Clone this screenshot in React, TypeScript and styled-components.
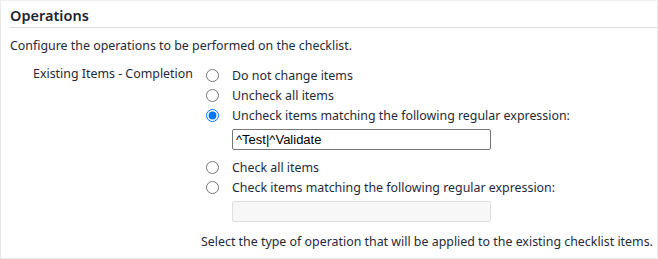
import React from "react";
import styled, { createGlobalStyle } from "styled-components";

const Global = createGlobalStyle`
  html, body { margin: 0; padding: 0; background: #fff; }
  body { font-family: "Noto Sans", "Open Sans", sans-serif; }
`;

const Panel = styled.div`
  box-sizing: border-box;
  width: 658px;
  height: 259px;
  border: 1px solid #e8e8e8;
  border-top-color: #efefef;
  padding-left: 9px;
  color: #1f2a3a;
  font-size: 12.4px;
`;

const Title = styled.h2`
  margin: 0;
  padding: 6px 0 3px 0;
  font-size: 14.5px;
  font-weight: 600;
  line-height: 17px;
  color: #1c2433;
  border-bottom: 1px solid #dcdcdc;
`;

const Description = styled.p`
  margin: 9px 0 0 0;
  line-height: 17px;
`;

const FormRow = styled.div`
  display: grid;
  grid-template-columns: 191px 1fr;
  margin-top: 11px;
`;

const Label = styled.div`
  padding-left: 23px;
  line-height: 17px;
  padding-top: 0px;
`;

const Options = styled.div`
  display: flex;
  flex-direction: column;
`;

const Option = styled.label`
  display: flex;
  align-items: center;
  height: 20px;
  line-height: 17px;
  input {
    margin: 0 13px 0 5px;
    width: 13px;
    height: 13px;
  }
`;

const TextInput = styled.input<{ $disabled?: boolean }>`
  box-sizing: border-box;
  width: 259px;
  height: 21px;
  margin: 4px 0 7px 31px;
  padding: 0 3px;
  font-family: "Liberation Sans", Arial, sans-serif;
  font-size: 13px;
  color: #000;
  border-radius: 2px;
  border: 1px solid ${(p) => (p.$disabled ? "#dedede" : "#767676")};
  background: ${(p) => (p.$disabled ? "#f7f7f7" : "#fff")};
  outline: none;
`;

const Help = styled.div`
  margin-top: 4px;
  line-height: 17px;
`;

export default function App() {
  return (
    <>
      <Global />
      <Panel>
        <Title>Operations</Title>
        <Description>Configure the operations to be performed on the checklist.</Description>
        <FormRow>
          <Label>Existing Items - Completion</Label>
          <Options>
            <Option>
              <input type="radio" name="op" />
              Do not change items
            </Option>
            <Option>
              <input type="radio" name="op" />
              Uncheck all items
            </Option>
            <Option>
              <input type="radio" name="op" defaultChecked />
              Uncheck items matching the following regular expression:
            </Option>
            <TextInput defaultValue="^Test|^Validate" />
            <Option>
              <input type="radio" name="op" />
              Check all items
            </Option>
            <Option>
              <input type="radio" name="op" />
              Check items matching the following regular expression:
            </Option>
            <TextInput $disabled disabled />
            <Help>Select the type of operation that will be applied to the existing checklist items.</Help>
          </Options>
        </FormRow>
      </Panel>
    </>
  );
}
